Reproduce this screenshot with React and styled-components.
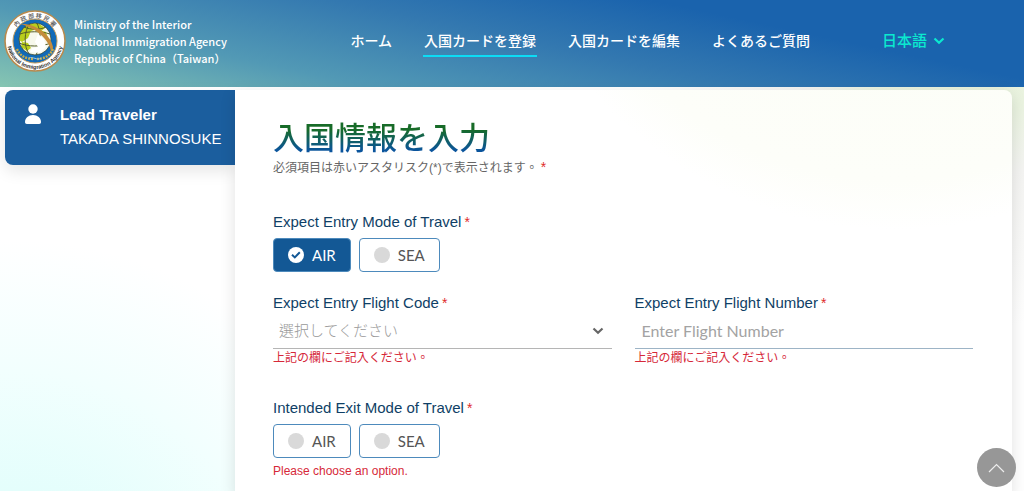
import React, { useState } from 'react';
import styled, { createGlobalStyle } from 'styled-components';

const GlobalStyle = createGlobalStyle`
  * {
    box-sizing: border-box;
  }

  body {
    margin: 0;
    font-family: 'Liberation Sans', 'Noto Sans CJK TC', sans-serif;
    color: #0f3f66;
  }

  input, select, button {
    font-family: inherit;
  }
`;

// ------ PAGE --------
const Page = styled.div`
  min-height: 100vh;
  display: flex;
  flex-direction: column;
  background:
    radial-gradient(circle at 10px 640px, #d5fffb 0, #e4fefc 150px, #f2fffe 270px, rgba(255, 255, 255, 0) 400px),
    radial-gradient(circle at 94% 0, #e5f1d6 0, #eaf3e0 120px, #f4f4f2 180px, rgba(248, 248, 248, 0) 330px),
    #fff;
`;

// ------ HEADER --------
const Header = styled.header`
  display: flex;
  align-items: center;
  height: 87px;
  padding: 0 79px 5px 4px;
  background: linear-gradient(12deg, #86c5b2 0, #5299b5 26%, #3378b0 52%, #1a63ad 74%);
`;

const Brand = styled.a`
  display: flex;
  align-items: center;
  gap: 8px;
  color: #fff;
  font: 500 11px/17px 'Noto Sans CJK TC', sans-serif;
  text-decoration: none;
  white-space: nowrap;
`;

const BrandLine = styled.span`
  display: block;
`;

const Nav = styled.nav`
  display: flex;
  gap: 30px;
  margin-left: auto;
`;

const NavLink = styled.a`
  padding: 4px 1px 2px;
  border-bottom: 2px solid ${({ $active }) => ($active ? '#0cdcf5' : 'transparent')};
  color: #fff;
  font-size: 14px;
  font-weight: 500;
  line-height: 24px;
  text-decoration: none;
  white-space: nowrap;
`;

const LanguageButton = styled.button`
  display: flex;
  align-items: center;
  gap: 6px;
  margin-left: 71px;
  padding: 0;
  border: 0;
  background: none;
  color: #0be9cf;
  font-size: 15px;
  font-weight: 500;
  line-height: 24px;
  white-space: nowrap;
`;

// ------ SIDEBAR --------
const Content = styled.div`
  display: flex;
  flex: 1;
  padding: 3px 12px 0 5px;
`;

const Sidebar = styled.aside`
  flex: 0 0 230px;
`;

const TravelerCard = styled.button`
  display: flex;
  align-items: flex-start;
  gap: 18px;
  width: 100%;
  height: 75px;
  padding: 13px 0 0 19px;
  border: 0;
  border-radius: 8px 0 0 8px;
  background: #1b5e9e;
  box-shadow: 0 6px 16px rgba(0, 0, 0, 0.1);
  color: #fff;
  font-size: 15px;
  line-height: 24px;
  text-align: left;
  white-space: nowrap;
`;

const TravelerRole = styled.strong`
  display: block;
`;

// ------ FORM PANEL --------
const Panel = styled.main`
  flex: 1;
  min-width: 0;
  padding: 30px 39px 12px 38px;
  border-radius: 0 8px 0 0;
  background: radial-gradient(circle at 660px -260px, #fbfdf4 0, #fdfef9 350px, #fff 400px);
  box-shadow: 0 4px 16px rgba(0, 0, 0, 0.12);
`;

const Title = styled.h1`
  width: fit-content;
  margin: 0;
  background: linear-gradient(#176b28 25%, #0a549c 80%);
  background-clip: text;
  color: transparent;
  font-size: 31px;
  font-weight: 500;
  line-height: 38px;
`;

const Hint = styled.p`
  margin: 0 0 34px;
  color: #666;
  font-size: 12px;
  line-height: 20px;
`;

const Required = styled.span`
  margin-left: 3px;
  color: #e02b2b;
  font-size: 14px;
  line-height: 1;
`;

const FieldRow = styled.div`
  display: grid;
  grid-template-columns: 1fr 1fr;
  gap: 23px;
  margin: 21px 0 31px;
`;

const Field = styled.div`
  min-width: 0;
`;

const FieldSet = styled.fieldset`
  min-width: 0;
  margin: 0;
  padding: 0;
  border: 0;
`;

const Legend = styled.legend`
  padding: 0 0 6px;
  font-size: 15px;
  line-height: 20px;
`;

const Label = styled.label`
  display: block;
  font-size: 15px;
  line-height: 20px;
`;

const Options = styled.div`
  display: flex;
  gap: 8px;
`;

const Option = styled.label`
  display: flex;
  align-items: center;
  gap: 8px;
  height: 34px;
  padding: 0 14px;
  border: 1px solid #4d8abc;
  border-radius: 4px;
  background: ${({ $checked }) => ($checked ? '#135895' : '#fff')};
  color: ${({ $checked }) => ($checked ? '#fff' : '#555')};
  font: 15px 'Lato', sans-serif;
`;

const Mark = styled.span`
  display: grid;
  place-items: center;

  & > * {
    grid-area: 1 / 1;
  }
`;

const Radio = styled.input`
  appearance: none;
  width: 16px;
  height: 16px;
  margin: 0;
  border-radius: 50%;
  background: #d9d9d9;

  &:checked {
    background: #fff;
  }
`;

const Control = styled.div`
  display: flex;
  align-items: center;
  height: 36px;
  padding: 0 8px 0 6px;
  border-bottom: 1px solid ${({ $line }) => $line};
`;

const Select = styled.select`
  appearance: none;
  flex: 1;
  min-width: 0;
  padding: 0;
  border: 0;
  background: none;
  color: #999;
  font-size: 15px;
  font-weight: 300;
  line-height: 24px;
`;

const TextInput = styled.input`
  flex: 1;
  min-width: 0;
  padding: 0 1px;
  border: 0;
  background: none;
  color: #555;
  font: 16px/24px 'Lato', sans-serif;

  &::placeholder {
    color: #a3a3a3;
  }
`;

const ErrorText = styled.p`
  margin: 0;
  color: #d62839;
  font-size: 12px;
  line-height: ${({ $tall }) => ($tall ? '26px' : '18px')};
`;

const ToTop = styled.button`
  position: fixed;
  right: 8px;
  bottom: 4px;
  display: grid;
  place-items: center;
  width: 39px;
  height: 39px;
  padding: 0;
  border: 0;
  border-radius: 50%;
  background: #979797;
`;

const Emblem = () => (
  <svg width="62" height="62" viewBox="0 0 62 62" aria-hidden="true">
    <defs>
      <path id="ringTop" d="M8 31a23 23 0 0 1 46 0" />
      <path id="ringBottom" d="M3 31a28 28 0 0 0 56 0" />
      <clipPath id="globe"><circle cx="31" cy="29" r="16" /></clipPath>
    </defs>
    <circle cx="31" cy="31" r="30" fill="#fff" stroke="#b98a4d" strokeWidth="1.6" />
    <circle cx="31" cy="31" r="22" fill="#116ab8" stroke="#c49a59" />
    <text fill="#555" fontSize="6" fontWeight="500" fontFamily="Noto Sans CJK TC">
      <textPath href="#ringTop" startOffset="50%" textAnchor="middle">內 政 部 移 民 署</textPath>
    </text>
    <text fill="#333" fontSize="5.5" fontWeight="700" fontFamily="Liberation Sans">
      <textPath href="#ringBottom" startOffset="50%" textAnchor="middle">National Immigration Agency</textPath>
    </text>
    <g clipPath="url(#globe)">
      <circle cx="31" cy="29" r="16" fill="#f7f8ec" />
      <path d="M16 22l7-8 11-1 7 5-5 4-3-3-6 2-3 7-6 4-3-2zM18 32l6 1 3 5-4 3-6-4zM35 20l7 2 2 6-4-1-5-4z" fill="#b9ce1c" />
      <path d="M26 13c-6 8-7 24 0 32M32 12c6 8 5 25 0 33M16 24c8-3 21-3 30 0M15 33c9 4 22 4 32 0M20 17c7 3 16 3 22 0" fill="none" stroke="#555d2a" strokeWidth="1" />
      <path d="M34 24l6 5 2 8-6 6-10-1 2-4 6-1-3-5z" fill="#fff" />
    </g>
    <circle cx="31" cy="29" r="16" fill="none" stroke="#394a38" strokeWidth=".8" />
    <path d="M17 14c13-1 30 10 32 23 0 2-1 4-2 5-1-11-13-23-30-28z" fill="#c58b3c" />
    <path d="M13 39c3 7 9 10 17 10M49 39c-3 7-9 10-17 10" fill="none" stroke="#c5ac4e" strokeWidth="2.4" strokeDasharray="2 1" />
    <path d="M25 48c4-2 8 3 12 0" fill="none" stroke="#9cc3d7" strokeWidth="1" />
  </svg>
);

const PersonIcon = () => (
  <svg width="18" height="22" viewBox="0 0 18 22" fill="#fff" aria-hidden="true">
    <circle cx="9" cy="6" r="4.7" />
    <path d="M1 19c0-4 3.500-7 8-7s8 3 8 7c0 1.300-.7 2-1.800 2H2.800C1.700 21 1 20.300 1 19z" />
  </svg>
);

const Chevron = ({ color }) => (
  <svg width="12" height="8" viewBox="0 0 12 8" fill="none" stroke={color} strokeWidth="2.200" aria-hidden="true">
    <path d="M1.500 1.500L6 5.800l4.500-4.300" />
  </svg>
);

const CheckIcon = () => (
  <svg width="10" height="8" viewBox="0 0 10 8" fill="none" stroke="#135895" strokeWidth="2" aria-hidden="true">
    <path d="M1 3.800l2.800 2.600L8.800 1.300" />
  </svg>
);

const MODES = ['AIR', 'SEA'];

const ModePicker = ({ legend, name, value, onChange, children }) => (
  <FieldSet>
    <Legend>
      {legend}
      <Required>*</Required>
    </Legend>
    <Options>
      {MODES.map((mode) => (
        <Option key={mode} $checked={value === mode}>
          <Mark>
            <Radio type="radio" name={name} checked={value === mode} onChange={() => onChange(mode)} />
            {value === mode && <CheckIcon />}
          </Mark>
          {mode}
        </Option>
      ))}
    </Options>
    {children}
  </FieldSet>
);

const NAV_ITEMS = ['ホーム', '入国カードを登録', '入国カードを編集', 'よくあるご質問'];

const App = () => {
  const [entryMode, setEntryMode] = useState('AIR');
  const [exitMode, setExitMode] = useState('');

  return (
    <Page>
      <GlobalStyle />
      <Header>
        <Brand href="#home">
          <Emblem />
          <span>
            <BrandLine>Ministry of the Interior</BrandLine>
            <BrandLine>National Immigration Agency</BrandLine>
            <BrandLine>Republic of China（Taiwan）</BrandLine>
          </span>
        </Brand>
        <Nav>
          {NAV_ITEMS.map((item, i) => (
            <NavLink key={item} href="#nav" $active={i === 1}>{item}</NavLink>
          ))}
        </Nav>
        <LanguageButton type="button">
          日本語
          <Chevron color="#0be9cf" />
        </LanguageButton>
      </Header>

      <Content>
        <Sidebar>
          <TravelerCard type="button">
            <PersonIcon />
            <span>
              <TravelerRole>Lead Traveler</TravelerRole>
              TAKADA SHINNOSUKE
            </span>
          </TravelerCard>
        </Sidebar>

        <Panel>
          <Title>入国情報を入力</Title>
          <Hint>
            必須項目は赤いアスタリスク(*)で表示されます。
            <Required>*</Required>
          </Hint>

          <ModePicker legend="Expect Entry Mode of Travel" name="entry" value={entryMode} onChange={setEntryMode} />

          <FieldRow>
            <Field>
              <Label htmlFor="flightCode">
                Expect Entry Flight Code
                <Required>*</Required>
              </Label>
              <Control $line="#b5b5b5">
                <Select id="flightCode" defaultValue="">
                  <option value="">選択してください</option>
                </Select>
                <Chevron color="#666" />
              </Control>
              <ErrorText>上記の欄にご記入ください。</ErrorText>
            </Field>
            <Field>
              <Label htmlFor="flightNumber">
                Expect Entry Flight Number
                <Required>*</Required>
              </Label>
              <Control $line="#9db4c6">
                <TextInput id="flightNumber" type="text" placeholder="Enter Flight Number" />
              </Control>
              <ErrorText>上記の欄にご記入ください。</ErrorText>
            </Field>
          </FieldRow>

          <ModePicker legend="Intended Exit Mode of Travel" name="exit" value={exitMode} onChange={setExitMode}>
            <ErrorText $tall>Please choose an option.</ErrorText>
          </ModePicker>
        </Panel>
      </Content>

      <ToTop type="button" aria-label="Back to top">
        <svg width="17" height="10" viewBox="0 0 17 10" fill="none" stroke="#eee" strokeWidth="1.200" aria-hidden="true">
          <path d="M1 9l7.500-7.500L16 9" />
        </svg>
      </ToTop>
    </Page>
  );
};

export default App;
